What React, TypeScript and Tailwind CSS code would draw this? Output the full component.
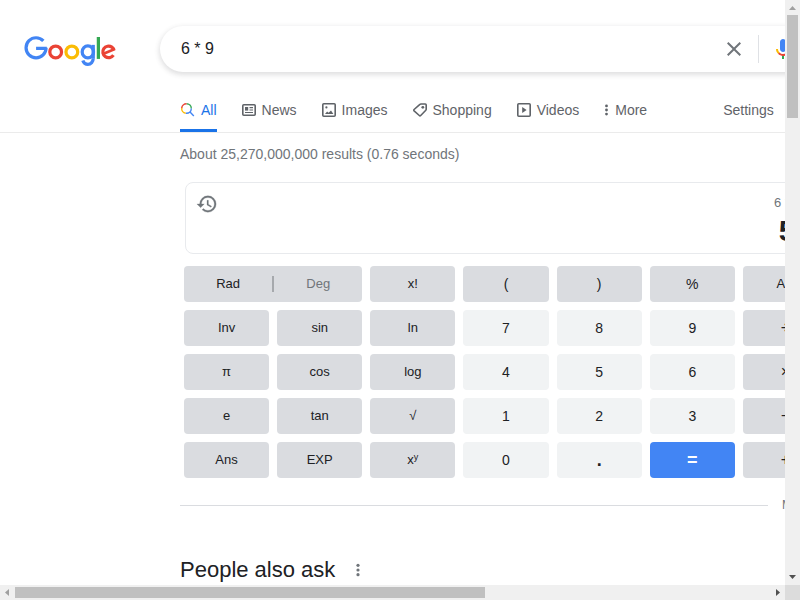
import React from "react";

type KeyTone = "dark" | "light" | "blue";

interface CalcKey {
  label: React.ReactNode;
  name: string;
  tone: KeyTone;
  size: string;
}

const fn = (label: React.ReactNode, name: string): CalcKey => ({ label, name, tone: "dark", size: "text-[13px]" });
const sym = (label: string): CalcKey => ({ label, name: label, tone: "dark", size: "text-sm" });
const op = (label: string, name: string): CalcKey => ({ label, name, tone: "dark", size: "text-base" });
const num = (label: string): CalcKey => ({ label, name: label, tone: "light", size: "text-sm" });

const keys: CalcKey[] = [
  fn("x!", "factorial"), sym("("), sym(")"), sym("%"), fn("AC", "all clear"),
  fn("Inv", "inverse"), fn("sin", "sine"), fn("ln", "natural logarithm"), num("7"), num("8"), num("9"), op("÷", "divide"),
  fn("π", "pi"), fn("cos", "cosine"), fn("log", "logarithm"), num("4"), num("5"), num("6"), op("×", "multiply"),
  fn("e", "euler's number"), fn("tan", "tangent"), fn("√", "square root"), num("1"), num("2"), num("3"), op("−", "minus"),
  fn("Ans", "answer"), fn("EXP", "exponential"),
  fn(<>x<sup className="text-[9px]">y</sup></>, "X to the power of Y"),
  num("0"),
  { label: ".", name: "point", tone: "light", size: "text-lg font-bold" },
  { label: "=", name: "equals", tone: "blue", size: "text-lg font-bold" },
  op("+", "plus"),
];

const tones: Record<KeyTone, string> = {
  dark: "bg-[#dadce0] text-[#202124]",
  light: "bg-[#f1f3f4] text-[#202124]",
  blue: "bg-[#4285f4] text-white",
};

function Logo() {
  return (
    <svg viewBox="0 0 272 92" className="h-[31px] w-[92px]" fill="none" strokeWidth="9.6" role="img" aria-label="Google">
      <g stroke="#4285f4">
        <circle cx="35.3" cy="34.9" r="29.7" pathLength="360" strokeDasharray="315 45" />
        <line x1="35.3" y1="36.7" x2="67.2" y2="36.7" />
        <ellipse cx="189" cy="47.2" rx="16.8" ry="17.6" />
        <line x1="205" y1="26.3" x2="205" y2="66.5" />
        <ellipse cx="189" cy="66" rx="16" ry="18.4" pathLength="360" strokeDasharray="154 206" />
      </g>
      <circle cx="93.5" cy="47.2" r="17.4" stroke="#ea4335" />
      <circle cx="141.5" cy="47.2" r="17.4" stroke="#fbbc05" />
      <line x1="220.2" y1="3" x2="220.2" y2="68" stroke="#34a853" />
      <g stroke="#ea4335">
        <circle cx="250.6" cy="47.2" r="17.2" pathLength="360" strokeDasharray="302 58" transform="rotate(34 250.6 47.2)" />
        <line x1="235.5" y1="52.5" x2="269.2" y2="38.5" strokeWidth="8" />
      </g>
    </svg>
  );
}

function Mic() {
  return (
    <svg viewBox="0 0 24 24" className="size-6">
      <path fill="#4285f4" d="M12 15c1.66 0 3-1.31 3-2.97V5.01C15 3.35 13.66 2 12 2S9 3.34 9 5.01v7.02C9 13.69 10.34 15 12 15z" />
      <path fill="#34a853" d="M11 18.08h2V22h-2z" />
      <path fill="#fbbc05" d="M7.05 16.87C5.78 15.54 5 14.04 5 12h2c0 1.45.56 2.42 1.47 3.38v.32l-1.15 1.18z" />
      <path fill="#ea4335" d="M12 16.93a4.97 5.25 0 0 1-3.54-1.55l-1.41 1.49C8.31 18.21 10.07 19 12 19c3.87 0 6.99-2.92 6.99-7H17c0 2.92-2.24 4.93-5 4.93z" />
    </svg>
  );
}

const icon = "size-4 shrink-0";

function AllIcon() {
  return (
    <svg viewBox="0 0 16 16" className={icon} fill="none" strokeWidth="1.4">
      <circle cx="6.5" cy="6.5" r="4.8" pathLength="360" stroke="#34a853" strokeDasharray="90 270" transform="rotate(-90 6.5 6.5)" />
      <circle cx="6.5" cy="6.5" r="4.8" pathLength="360" stroke="#4285f4" strokeDasharray="100 260" />
      <circle cx="6.5" cy="6.5" r="4.8" pathLength="360" stroke="#fbbc05" strokeDasharray="90 270" transform="rotate(100 6.5 6.5)" />
      <circle cx="6.5" cy="6.5" r="4.8" pathLength="360" stroke="#ea4335" strokeDasharray="85 275" transform="rotate(185 6.5 6.5)" />
      <path d="M9.8 9.8l4 4.1" stroke="#4285f4" />
    </svg>
  );
}

function NewsIcon() {
  return (
    <svg viewBox="0 0 16 16" className={icon} fill="none" stroke="currentColor" strokeWidth="1.6">
      <rect x="1.8" y="2.8" width="12.4" height="10.4" rx="1" />
      <path d="M8.5 5.6H12M8.5 8H12M4 10.5h8" strokeWidth="1.2" />
      <rect x="4" y="5" width="3.2" height="3.6" fill="currentColor" stroke="none" />
    </svg>
  );
}

function ImagesIcon() {
  return (
    <svg viewBox="0 0 16 16" className={icon}>
      <rect x="1.8" y="1.8" width="12.4" height="12.4" rx="1" fill="none" stroke="currentColor" strokeWidth="1.6" />
      <path fill="currentColor" d="M4 12l2.1-2.6 1.5 1.4 2.4-2.4L12.4 12z" />
      <circle cx="5.4" cy="5.4" r="1.1" fill="currentColor" />
    </svg>
  );
}

function ShoppingIcon() {
  return (
    <svg viewBox="0 0 16 16" className={icon}>
      <path fill="none" stroke="currentColor" strokeWidth="1.6" strokeLinejoin="round" d="M8.9 2h4.4c.5 0 .9.4.9.9v4.3c0 .4-.1.7-.4 1l-5.1 5.3c-.4.4-1 .4-1.4 0L2.1 8.9c-.4-.4-.4-1 0-1.4l5.8-5.1c.3-.3.6-.4 1-.4z" />
      <circle cx="10.8" cy="5.3" r="1.4" fill="currentColor" />
    </svg>
  );
}

function VideosIcon() {
  return (
    <svg viewBox="0 0 16 16" className={icon}>
      <rect x="1.8" y="1.8" width="12.4" height="12.4" rx="1" fill="none" stroke="currentColor" strokeWidth="1.6" />
      <path fill="currentColor" d="M6.2 5.1v5.8L10.6 8z" />
    </svg>
  );
}

function Dots({ className }: { className: string }) {
  return (
    <svg viewBox="0 0 8 16" className={className} fill="currentColor">
      <circle cx="4" cy="3.3" r="1.6" />
      <circle cx="4" cy="8" r="1.6" />
      <circle cx="4" cy="12.7" r="1.6" />
    </svg>
  );
}

function Tab({ label, children, active = false }: { label: string; children: React.ReactNode; active?: boolean }) {
  return (
    <a
      href="#"
      aria-current={active ? "page" : undefined}
      className={
        "flex items-center gap-[5px] border-b-[3px] " +
        (active ? "border-[#1a73e8] text-[#1a73e8]" : "border-transparent")
      }
    >
      {children}
      {label}
    </a>
  );
}

function Header() {
  return (
    <header className="flex items-center pt-[26px] pl-6">
      <a href="#" className="mt-1 mr-11 block">
        <Logo />
      </a>
      <form role="search" className="flex h-[46px] w-[692px] items-center rounded-full bg-white pr-[17px] pl-[21px] shadow-[0_2px_5px_1px_rgba(64,60,67,0.16)]">
        <input aria-label="Search" defaultValue="6 * 9" className="min-w-0 flex-1 text-base text-[#202124] outline-none" />
        <button type="button" aria-label="Clear" className="text-[#70757a]">
          <svg viewBox="0 0 24 24" className="size-6" fill="currentColor">
            <path d="M19 6.41L17.59 5 12 10.59 6.41 5 5 6.41 10.59 12 5 17.59 6.41 19 12 13.41 17.59 19 19 17.59 13.41 12z" />
          </svg>
        </button>
        <span className="mx-3 h-7 w-px bg-[#dfe1e5]" />
        <button type="button" aria-label="Search by voice">
          <Mic />
        </button>
        <button type="submit" aria-label="Google Search" className="ml-4 text-[#4285f4]">
          <svg viewBox="0 0 24 24" className="size-6" fill="none" stroke="currentColor" strokeWidth="2">
            <circle cx="9.5" cy="9.5" r="5.5" />
            <path d="M14 14l6 6" />
          </svg>
        </button>
      </form>
    </header>
  );
}

function Calculator() {
  return (
    <section aria-label="Calculator" className="mt-1.5 px-1">
      <div className="ml-px flex h-[72px] items-start justify-between rounded-lg border border-[#e8eaed] pt-2.5 pr-[15px] pl-2.5">
        <button type="button" aria-label="History" className="text-[#70757a]">
          <svg viewBox="0 0 24 24" className="size-[22px]" fill="currentColor">
            <path d="M13 3a9 9 0 0 0-9 9H1l3.89 3.89.07.14L9 12H6c0-3.87 3.13-7 7-7s7 3.13 7 7-3.13 7-7 7c-1.93 0-3.68-.79-4.94-2.06l-1.42 1.42A8.954 8.954 0 0 0 13 21a9 9 0 0 0 0-18zm-1 5v5l4.28 2.54.72-1.21-3.5-2.08V8z" stroke="currentColor" strokeWidth="0.3" />
          </svg>
        </button>
        <div className="text-right">
          <div className="text-[13px] leading-5 text-[#70757a]">6 * 9 =</div>
          <div className="text-[30px] leading-9 font-bold text-[#202124]">54</div>
        </div>
      </div>
      <div className="mt-3 grid auto-rows-[36px] grid-cols-7 gap-2">
        <div className="col-span-2 flex items-center rounded bg-[#dadce0] text-[13px]">
          <button type="button" className="flex-1 text-[#202124]">Rad</button>
          <span className="h-4 w-0.5 bg-[#a6a9ad]" />
          <button type="button" className="flex-1 text-[#70757a]">Deg</button>
        </div>
        {keys.map((key) => (
          <button key={key.name} type="button" aria-label={key.name} className={`rounded ${tones[key.tone]} ${key.size}`}>
            {key.label}
          </button>
        ))}
      </div>
    </section>
  );
}

function Arrow({ d, className }: { d: string; className: string }) {
  return (
    <svg viewBox="0 0 15 15" className={`size-[15px] shrink-0 ${className}`} fill="currentColor">
      <path d={d} />
    </svg>
  );
}

export default function App() {
  return (
    <div className="grid h-screen grid-cols-[minmax(0,1fr)_15px] grid-rows-[minmax(0,1fr)_15px] bg-white font-['Liberation_Sans',Arial,sans-serif]">
      <div className="overflow-hidden">
        <div className="min-w-[1261px]">
          <Header />
          <nav aria-label="Search categories" className="mt-[19px] flex border-b border-[#ebebeb] pl-[180px] text-sm text-[#5f6368]">
            <div className="flex h-[41px] gap-6">
              <Tab label="All" active><AllIcon /></Tab>
              <Tab label="News"><NewsIcon /></Tab>
              <Tab label="Images"><ImagesIcon /></Tab>
              <Tab label="Shopping"><ShoppingIcon /></Tab>
              <Tab label="Videos"><VideosIcon /></Tab>
              <Tab label="More"><Dots className="h-3.5 w-[7px]" /></Tab>
            </div>
            <a href="#" className="ml-[76px] flex items-center border-b-[3px] border-transparent">Settings</a>
          </nav>
          <main className="ml-[180px] w-[652px]">
            <p className="text-sm leading-[43px] text-[#70757a]">About 25,270,000,000 results (0.76 seconds)</p>
            <Calculator />
            <div className="mt-[17px] flex items-center gap-3.5">
              <hr className="flex-1 border-[#dadce0]" />
              <a href="#" className="text-xs leading-5 text-[#70757a]">More info</a>
            </div>
            <div className="mt-10 flex items-center gap-[19px]">
              <h2 className="text-[22px] leading-[30px] text-[#202124]">People also ask</h2>
              <button type="button" aria-label="About this result" className="text-[#70757a]">
                <Dots className="h-4 w-2" />
              </button>
            </div>
          </main>
        </div>
      </div>
      <div className="flex flex-col items-center bg-[#f0f0f0]">
        <Arrow d="M4 10h7L7.5 6z" className="text-[#a0a0a0]" />
        <div className="h-[103px] w-[11px] bg-[#c0c0c0]" />
        <Arrow d="M4 5h7L7.5 9z" className="mt-auto text-[#505050]" />
      </div>
      <div className="flex items-center bg-[#f0f0f0]">
        <Arrow d="M9 4v7L5 7.5z" className="text-[#a0a0a0]" />
        <div className="h-[11px] w-[470px] bg-[#c0c0c0]" />
        <Arrow d="M6 4v7l4-3.5z" className="ml-auto text-[#505050]" />
      </div>
      <div className="bg-[#dcdcdc]" />
    </div>
  );
}
